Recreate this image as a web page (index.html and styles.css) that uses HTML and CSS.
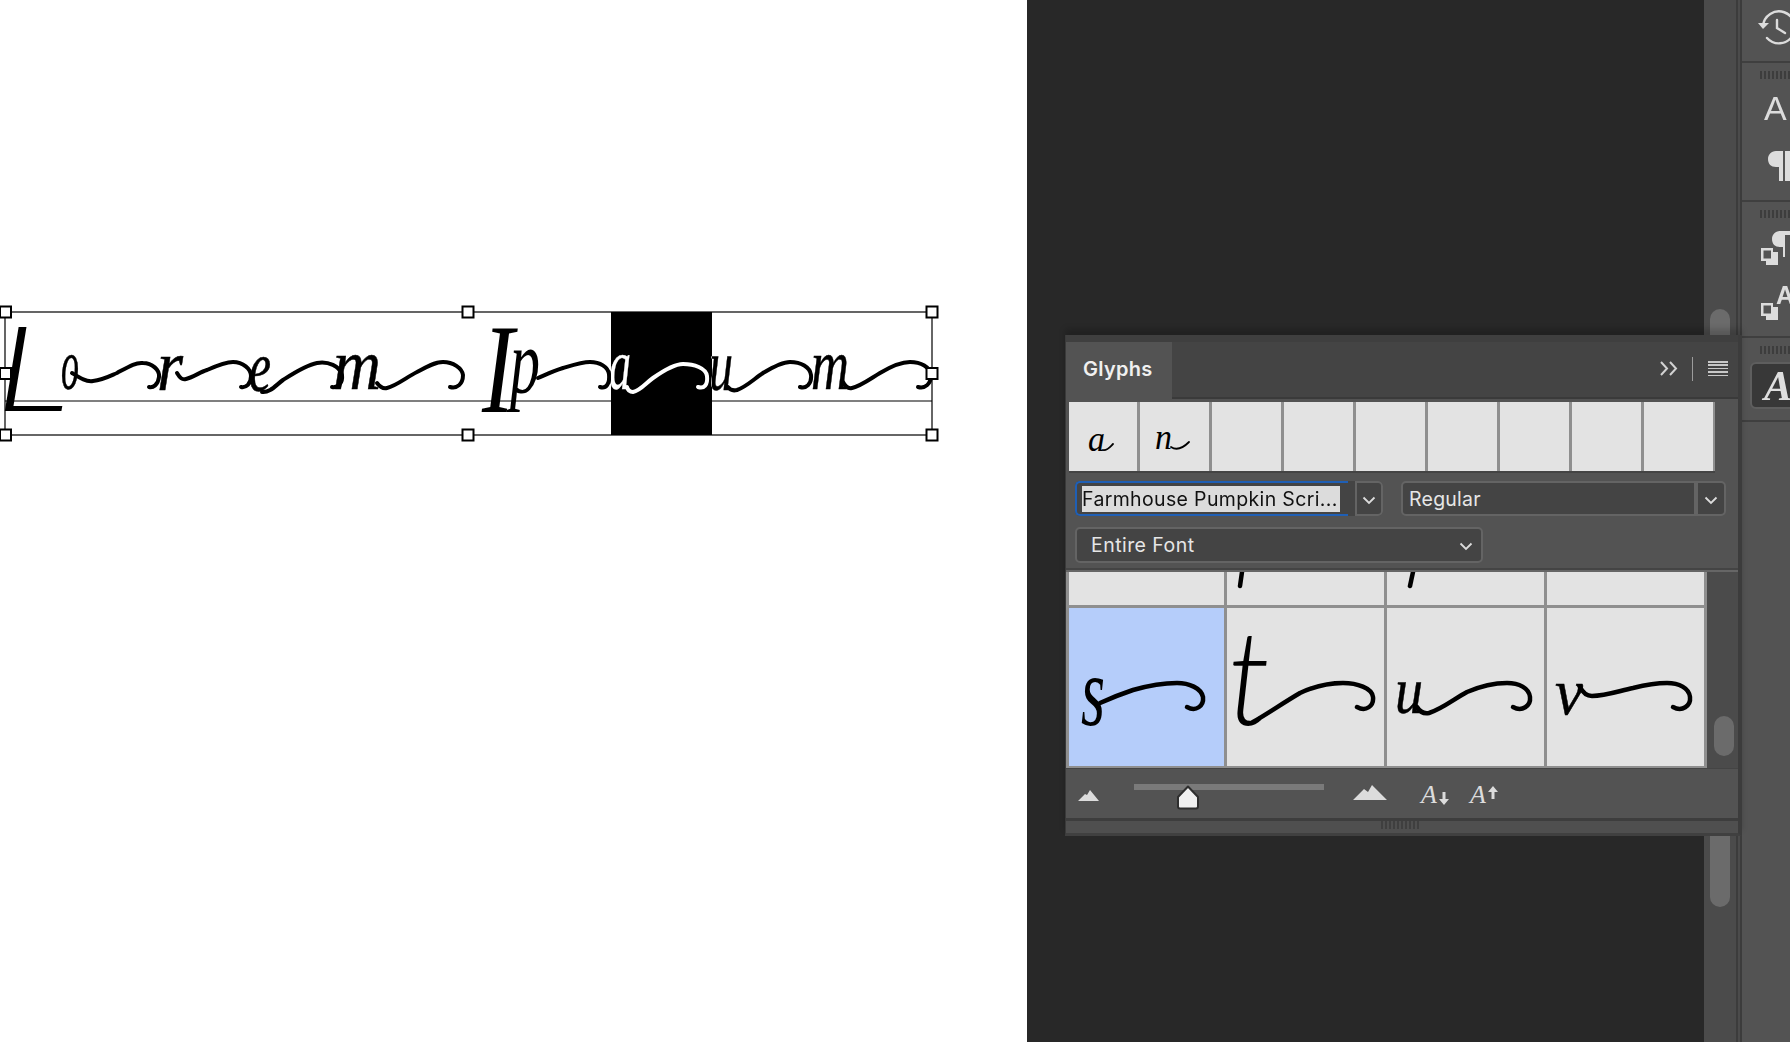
FILE: index.html
```html
<!DOCTYPE html>
<html lang="en">
<head>
<meta charset="utf-8">
<title>Glyphs panel</title>
<link rel="stylesheet" href="styles.css">
</head>
<body>
<div class="app">
  <main class="canvas">
    <svg class="doc" viewBox="0 0 1027 1042" width="1027" height="1042">
      <rect class="paper" width="1027" height="1042"/>
      <g class="script">
        <text class="cap" x="-5" y="411" textLength="74" lengthAdjust="spacingAndGlyphs">L</text>
        <text x="61" y="389" textLength="18" lengthAdjust="spacingAndGlyphs">o</text>
        <text x="157" y="390" textLength="26" lengthAdjust="spacingAndGlyphs">r</text>
        <text x="249" y="391" textLength="22" lengthAdjust="spacingAndGlyphs">e</text>
        <text x="333" y="389" textLength="48" lengthAdjust="spacingAndGlyphs">m</text>
        <text class="cap-i" x="482" y="412" textLength="32" lengthAdjust="spacingAndGlyphs">I</text>
        <text class="tall" x="510" y="393" textLength="30" lengthAdjust="spacingAndGlyphs">p</text>
        <text x="609" y="389" textLength="22" lengthAdjust="spacingAndGlyphs">a</text>
        <text x="709" y="390" textLength="24" lengthAdjust="spacingAndGlyphs">u</text>
        <text x="811" y="389" textLength="38" lengthAdjust="spacingAndGlyphs">m</text>
      </g>
      <g class="swash">
        <path d="M72 373C80 378 86 382 93 381C103 380 112 375 117 373C128 367 136 362 143 363C152 363 160 370 159 377C158 385 153 388 149 387"/>
        <path d="M177 373C180 378 182 380 186 379C194 377 200 372 207 370C216 366 226 362 233 362C243 362 251 369 251 376C251 384 246 388 241 387"/>
        <path d="M262 392C270 393 276 385 283 380C294 373 306 365 317 363C328 361 340 366 342 375C343 383 338 388 332 387"/>
        <path d="M377 383C380 387 383 389 387 388C396 386 407 377 417 372C426 367 435 362 443 362C453 362 462 368 463 375C463 384 457 389 450 387"/>
        <path d="M538 378C545 375 553 371 563 368C573 365 582 362 590 362C600 362 608 367 609 374C610 384 606 389 600 387"/>
        <path d="M627 387C628 391 630 392 633 392C640 391 646 383 653 378C663 371 674 364 683 364C694 364 706 368 707 376C708 385 704 389 698 387"/>
        <path d="M728 387C730 390 733 391 737 390C746 387 754 379 763 373C773 367 782 362 790 362C801 362 810 367 811 375C812 384 806 389 800 387"/>
        <path d="M843 382C845 386 848 389 852 388C861 386 870 379 880 373C890 367 900 362 910 362C921 362 930 367 931 375C931 384 925 389 918 387"/>
      </g>
      <rect class="invert" x="611" y="312" width="101" height="123"/>
      <g class="frame">
        <rect x="5" y="312" width="927" height="123"/>
        <line x1="5" y1="401" x2="932" y2="401"/>
      </g>
      <g class="handles">
        <rect x="0" y="306.500" width="11" height="11"/>
        <rect x="462.500" y="306.500" width="11" height="11"/>
        <rect x="926.500" y="306.500" width="11" height="11"/>
        <rect x="0" y="368" width="11" height="11"/>
        <rect x="926.500" y="368" width="11" height="11"/>
        <rect x="0" y="429.500" width="11" height="11"/>
        <rect x="462.500" y="429.500" width="11" height="11"/>
        <rect x="926.500" y="429.500" width="11" height="11"/>
      </g>
    </svg>
  </main>

  <div class="workspace"></div>

  <div class="side-scroll"><div class="side-thumb"></div></div>

  <aside class="dock">
    <section class="dock-group g-history">
      <svg class="dock-icon" width="48" height="61" viewBox="0 0 48 61">
        <path class="ico-line" d="M21 26A16 16 0 1 1 25 38"/>
        <path class="ico-fill" d="M16 23H27L21 29Z"/>
        <path class="ico-line" d="M35 20V28L43 33"/>
      </svg>
    </section>
    <section class="dock-group g-char">
      <div class="grip"></div>
      <svg class="dock-icon" width="48" height="120" viewBox="0 0 48 120">
        <text class="ico-a" x="22" y="41">A</text>
        <path class="ico-fill" d="M41 72H34C29 72 26 76 26 80C26 85 29 88 34 88H37V102H41ZM43 72H48V102H43Z"/>
      </svg>
    </section>
    <section class="dock-group g-styles">
      <div class="grip"></div>
      <svg class="dock-icon" width="48" height="118" viewBox="0 0 48 118">
        <path class="ico-fill" d="M48 13H38C33 13 30 17 30 21C30 26 33 29 38 29H41V39H43V17H48Z"/>
        <path class="ico-square" d="M19 30H31V34H36V47H24V43H19ZM21.500 32.500V40.500H29V32.500Z"/>
        <text class="ico-a-small" x="34" y="86">A</text>
        <path class="ico-square" d="M19 85H31V89H36V102H24V98H19ZM21.500 87.500V95.500H29V87.500Z"/>
      </svg>
    </section>
    <section class="dock-group g-glyph">
      <div class="grip"></div>
      <div class="glyph-btn"><span class="fancy-a">A</span></div>
    </section>
    <section class="dock-group g-rest"></section>
  </aside>

  <section class="panel">
    <div class="panel-top"></div>
    <header class="panel-head">
      <div class="tab">Glyphs</div>
      <div class="head-tools">
        <svg width="18" height="15" viewBox="0 0 18 15"><path class="chev-2" d="M1 1L7 7.500L1 14M10 1L16 7.500L10 14"/></svg>
        <span class="head-div"></span>
        <span class="menu-lines"></span>
      </div>
    </header>

    <div class="recent">
      <div class="cell">
        <svg width="69" height="69" viewBox="0 0 69 69"><text class="mini" x="19" y="49" textLength="17" lengthAdjust="spacingAndGlyphs">a</text><path class="mini-tail" d="M34 48C38 49 41 45 44 42"/></svg>
      </div>
      <div class="cell">
        <svg width="69" height="69" viewBox="0 0 69 69"><text class="mini" x="15" y="47" textLength="17" lengthAdjust="spacingAndGlyphs">n</text><path class="mini-tail" d="M31 45C37 49 43 46 49 40"/></svg>
      </div>
      <div class="cell"></div><div class="cell"></div><div class="cell"></div>
      <div class="cell"></div><div class="cell"></div><div class="cell"></div><div class="cell"></div>
    </div>

    <div class="controls">
      <div class="control-row">
        <div class="combo combo-font">
          <div class="combo-field field-focus"><span class="selected-text">Farmhouse Pumpkin Scri...</span></div>
          <div class="combo-arrow"><svg width="14" height="9" viewBox="0 0 14 9"><path class="chev" d="M1.500 1.500L7 7L12.500 1.500"/></svg></div>
        </div>
        <div class="combo combo-style">
          <div class="combo-field">Regular</div>
          <div class="combo-arrow"><svg width="14" height="9" viewBox="0 0 14 9"><path class="chev" d="M1.500 1.500L7 7L12.500 1.500"/></svg></div>
        </div>
      </div>
      <div class="select-all">
        <span>Entire Font</span>
        <svg width="14" height="9" viewBox="0 0 14 9"><path class="chev" d="M1.500 1.500L7 7L12.500 1.500"/></svg>
      </div>
    </div>

    <div class="glyph-area">
      <div class="glyph-grid">
        <div class="g-cell partial"></div>
        <div class="g-cell partial"><svg width="157" height="33" viewBox="0 0 157 33"><path class="stem" d="M15 0L13 14"/></svg></div>
        <div class="g-cell partial"><svg width="157" height="33" viewBox="0 0 157 33"><path class="stem" d="M26 0L23 14"/></svg></div>
        <div class="g-cell partial"></div>

        <div class="g-cell active">
          <svg width="155" height="158" viewBox="0 0 155 158">
            <text class="big" x="12" y="117" textLength="24" lengthAdjust="spacingAndGlyphs">s</text>
            <path class="big-tail" d="M31 95C42 90 52 86 64 82C78 78 95 75 108 75C120 75 132 80 134 89C135 98 127 104 118 99"/>
          </svg>
        </div>
        <div class="g-cell">
          <svg width="157" height="158" viewBox="0 0 157 158">
            <text class="big tee" x="1" y="117" textLength="42" lengthAdjust="spacingAndGlyphs">t</text>
            <path class="big-tail" d="M26 114C40 106 56 95 73 85C88 78 103 75 116 75C130 75 145 80 146 89C147 98 139 104 130 99"/>
          </svg>
        </div>
        <div class="g-cell">
          <svg width="157" height="158" viewBox="0 0 157 158">
            <text class="big small-x" x="8" y="105" textLength="28" lengthAdjust="spacingAndGlyphs">u</text>
            <path class="big-tail" d="M30 99C33 104 37 106 42 105C55 101 67 91 80 84C94 78 108 75 120 75C132 75 142 80 143 89C144 98 135 104 126 99"/>
          </svg>
        </div>
        <div class="g-cell">
          <svg width="157" height="158" viewBox="0 0 157 158">
            <text class="big small-x" x="8" y="106" textLength="28" lengthAdjust="spacingAndGlyphs">v</text>
            <path class="big-tail" d="M33 79C36 85 39 88 45 88C58 88 72 83 86 80C98 77 110 75 120 75C132 75 142 80 143 89C144 98 135 104 126 99"/>
          </svg>
        </div>
      </div>
      <div class="grid-scroll"><div class="grid-thumb"></div></div>
    </div>

    <footer class="toolbar">
      <svg class="mt-s" width="21" height="11" viewBox="0 0 21 11"><path class="ico-fill" d="M0 11L7 4L9 5L12 0L21 11Z"/></svg>
      <div class="slider"><div class="slider-thumb"><svg width="24" height="25" viewBox="0 0 24 25"><path class="house" d="M12 1.500L22 12V21.500Q22 23.500 20 23.500H4Q2 23.500 2 21.500V12Z"/></svg></div></div>
      <svg class="mt-l" width="34" height="15" viewBox="0 0 34 15"><path class="ico-fill" d="M0 15L11 4L15 7L19 0L34 15Z"/></svg>
      <div class="size-btn"><span class="fancy-small">A</span><svg width="10" height="13" viewBox="0 0 10 13"><path class="ico-fill" d="M3.500 0H6.500V7H10L5 13L0 7H3.500Z"/></svg></div>
      <div class="size-btn"><span class="fancy-small">A</span><svg width="10" height="13" viewBox="0 0 10 13"><path class="ico-fill" d="M3.500 13H6.500V6H10L5 0L0 6H3.500Z"/></svg></div>
    </footer>
    <div class="toolbar-line"></div>
    <div class="resize"><div class="resize-grip"></div></div>
  </section>
</div>
</body>
</html>
```
FILE: styles.css
```css
* { box-sizing: border-box; }

html, body {
  margin: 0;
  width: 1790px;
  height: 1042px;
  overflow: hidden;
  background: #282828;
}

.app {
  position: relative;
  display: flex;
  width: 1790px;
  height: 1042px;
  overflow: hidden;
  font-family: Inter, "Liberation Sans", sans-serif;
}

/* Document */
.canvas { width: 1027px; flex: none; background: #fff; }
.doc { display: block; }
.paper { fill: #fff; }
.script text {
  font-family: "Liberation Serif", serif;
  font-style: italic;
  font-size: 72px;
  fill: #000;
  stroke: #000;
  stroke-width: 0.500px;
}
.script text.cap {
  font-family: Lato, "Liberation Sans", sans-serif;
  font-weight: 300;
  font-size: 118px;
  stroke-width: 0;
}
.script text.cap-i { font-size: 128px; stroke-width: 0; }
.script text.tall { font-size: 90px; stroke-width: 0; }
.swash path {
  fill: none;
  stroke: #000;
  stroke-width: 4px;
  stroke-linecap: round;
  stroke-linejoin: round;
}
.invert { fill: #fff; mix-blend-mode: difference; }
.frame rect, .frame line { fill: none; stroke: #000; stroke-width: 1.200px; }
.handles rect { fill: #fff; stroke: #000; stroke-width: 2px; }

/* Workspace + scrollbar */
.workspace { width: 677px; flex: none; background: #282828; }
.side-scroll {
  position: relative;
  width: 38px;
  flex: none;
  background: #4b4b4b;
  border-right: 2px solid #3c3c3c;
}
.side-scroll::after {
  content: "";
  position: absolute;
  top: 0;
  bottom: 0;
  left: 32px;
  width: 2px;
  background: #3c3c3c;
}
.side-thumb {
  position: absolute;
  top: 309px;
  left: 6px;
  width: 20px;
  height: 598px;
  border-radius: 10px;
  background: #6b6b6b;
}

/* Dock */
.dock {
  width: 48px;
  flex: none;
  display: flex;
  flex-direction: column;
  background: #535353;
  overflow: hidden;
}
.dock-group { border-bottom: 2px solid #3f3f3f; flex: none; }
.dock-icon { display: block; }
.g-history { height: 63px; }
.g-char { height: 139px; padding-top: 8px; }
.g-styles { height: 136px; padding-top: 8px; }
.g-glyph { height: 84px; padding-top: 8px; }
.g-rest { flex: 1; border-bottom: 0; }
.grip {
  width: 60px;
  height: 8px;
  margin-left: 18px;
  background: repeating-linear-gradient(90deg, #3d3d3d 0 2px, transparent 2px 4px);
}
.ico-line { fill: none; stroke: #dcdcdc; stroke-width: 2.400px; stroke-linecap: round; }
.ico-fill { fill: #dcdcdc; }
.ico-square { fill: #dcdcdc; fill-rule: evenodd; }
.ico-a { font-family: "Liberation Sans", sans-serif; font-size: 34px; fill: #dcdcdc; }
.ico-a-small { font-family: "Liberation Sans", sans-serif; font-weight: 700; font-size: 25px; fill: #dcdcdc; }
.glyph-btn {
  width: 60px;
  height: 47px;
  margin: 8px 0 0 8px;
  background: #383838;
  border: 2px solid #5e5e5e;
  border-radius: 6px;
  display: flex;
  align-items: center;
  padding-left: 12px;
}
.fancy-a {
  font-family: "Liberation Serif", serif;
  font-style: italic;
  font-weight: 700;
  font-size: 42px;
  line-height: 1;
  color: #dedede;
}

/* Panel */
.panel {
  position: absolute;
  left: 1065px;
  top: 335px;
  width: 677px;
  height: 501px;
  display: flex;
  flex-direction: column;
  background: #535353;
  border-left: 1px solid #3a3a3a;
  border-right: 4px solid #3c3c3c;
  border-bottom: 3px solid #404040;
  box-shadow: 0 -6px 6px rgba(0, 0, 0, 0.18);
}
.panel-top { height: 7px; background: #3f3f3f; flex: none; }
.panel-head {
  height: 57px;
  flex: none;
  display: flex;
  justify-content: space-between;
  background: #444;
  border-bottom: 2px solid #3a3a3a;
}
.tab {
  width: 106px;
  height: 57px;
  display: flex;
  align-items: center;
  padding: 0 0 4px 17px;
  background: #535353;
  color: #f0f0f0;
  font-size: 20px;
  font-weight: 600;
  letter-spacing: 0.300px;
}
.head-tools { display: flex; align-items: center; padding: 0 10px 2px 0; }
.chev-2 { fill: none; stroke: #d2d2d2; stroke-width: 2px; }
.head-div { width: 1px; height: 24px; margin: 0 15px 0 14px; background: #9c9c9c; }
.menu-lines {
  width: 20px;
  height: 15px;
  background: repeating-linear-gradient(180deg, #c8c8c8 0 1.500px, transparent 1.500px 3.400px);
}

.recent {
  flex: none;
  margin-top: 3px;
  margin-left: 3px;
  width: 646px;
  height: 71px;
  padding-right: 2px;
  display: grid;
  grid-template-columns: 67.500px repeat(8, 1fr);
  gap: 3px;
  background: #8f8f8f;
  border-bottom: 2px solid #444;
}
.cell { background: #e3e3e3; overflow: hidden; }
.cell svg { display: block; }
.mini { font-family: "Liberation Serif", serif; font-style: italic; font-size: 36px; fill: #000; }
.mini-tail { fill: none; stroke: #000; stroke-width: 1.800px; stroke-linecap: round; }

.controls {
  flex: none;
  height: 97px;
  padding: 8px 0 0 9px;
  display: flex;
  flex-direction: column;
  gap: 11px;
  border-bottom: 2px solid #444;
}
.control-row { display: flex; gap: 18px; }
.combo { height: 35px; display: flex; flex: none; }
.combo-font { width: 308px; background: #444; border-radius: 5px; }
.combo-style { width: 325px; }
.combo-field {
  flex: 1;
  display: flex;
  align-items: center;
  padding-left: 6px;
  background: #444;
  border: 2px solid #646464;
  border-radius: 5px 0 0 5px;
  color: #e6e6e6;
  font-size: 19.500px;
  letter-spacing: 0.250px;
}
.combo-font .combo-field { flex: 0 0 273px; }
.field-focus {
  padding-left: 5px;
  border: 0;
  border-top: 2px solid #1f5fb5;
  border-bottom: 2px solid #1f5fb5;
  border-left: 2px solid #1f5fb5;
}
.selected-text {
  display: block;
  width: 258px;
  height: 26px;
  line-height: 26px;
  background: #dcdcdc;
  color: #111;
  white-space: nowrap;
  overflow: hidden;
  letter-spacing: 0.350px;
}
.combo-arrow {
  width: 30px;
  flex: none;
  display: flex;
  align-items: center;
  justify-content: center;
  background: #444;
  border: 2px solid #646464;
  border-radius: 0 5px 5px 0;
  padding-top: 3px;
}
.combo-font .combo-arrow { width: 28px; margin-left: 7px; }
.chev { fill: none; stroke: #dcdcdc; stroke-width: 1.800px; }
.select-all {
  width: 408px;
  height: 36px;
  flex: none;
  display: flex;
  align-items: center;
  justify-content: space-between;
  padding: 0 8px 0 14px;
  background: #444;
  border: 2px solid #646464;
  border-radius: 5px;
  color: #e6e6e6;
  font-size: 19.500px;
  letter-spacing: 0.450px;
}
.select-all svg { margin-top: 3px; }

.glyph-area {
  flex: none;
  height: 198px;
  display: flex;
  background: #4b4b4b;
  border-top: 2px solid #666;
}
.glyph-grid {
  flex: none;
  width: 641px;
  padding: 0 3px 2px 3px;
  display: grid;
  grid-template-columns: 155px repeat(3, 157px);
  grid-template-rows: 33px 158px;
  gap: 3px;
  background: #8f8f8f;
}
.g-cell { background: #e3e3e3; overflow: hidden; }
.g-cell svg { display: block; }
.g-cell.active { background: #b5cdfa; }
.stem { fill: none; stroke: #000; stroke-width: 4.500px; stroke-linecap: round; }
.big { font-family: "Liberation Serif", serif; font-style: italic; font-size: 100px; fill: #000; }
.big.tee { font-family: Lato, "Liberation Sans", sans-serif; font-weight: 300; font-size: 132px; }
.big.small-x { font-size: 66px; stroke: #000; stroke-width: 0.500px; }
.big-tail { fill: none; stroke: #000; stroke-width: 4.500px; stroke-linecap: round; stroke-linejoin: round; }
.grid-scroll { flex: 1; position: relative; }
.grid-thumb {
  position: absolute;
  left: 7px;
  top: 144px;
  width: 20px;
  height: 40px;
  border-radius: 10px;
  background: #6b6b6b;
}

.toolbar {
  flex: none;
  height: 50px;
  display: flex;
  align-items: flex-start;
  padding-left: 12px;
  background: #535353;
  border-top: 1px solid #444;
}
.mt-s { margin: 21px 0 0; }
.slider {
  position: relative;
  width: 190px;
  height: 6px;
  margin: 15px 0 0 35px;
  background: #7a7a7a;
}
.slider-thumb { position: absolute; left: 42px; top: 1px; line-height: 0; }
.house { fill: #f0f0f0; stroke: #2e2e2e; stroke-width: 2px; stroke-linejoin: round; }
.mt-l { margin: 16px 0 0 29px; }
.size-btn { display: flex; align-items: flex-end; margin: 14px 0 0 34px; height: 24px; width: 28px; }
.size-btn + .size-btn { margin-left: 21px; }
.size-btn svg { margin: 0 0 2px -1px; flex: none; }
.size-btn:last-child svg { margin-bottom: 8px; }
.fancy-small {
  font-family: "Liberation Serif", serif;
  font-style: italic;
  font-size: 26px;
  line-height: 24px;
  color: #dcdcdc;
  width: 19px;
}

.toolbar-line { flex: none; height: 3px; background: #3d3d3d; }
.resize { flex: 1; background: #4f4f4f; display: flex; justify-content: center; }
.resize-grip {
  width: 38px;
  height: 8px;
  margin-left: -4px;
  background: repeating-linear-gradient(90deg, #3f3f3f 0 2px, transparent 2px 4px);
}
```
